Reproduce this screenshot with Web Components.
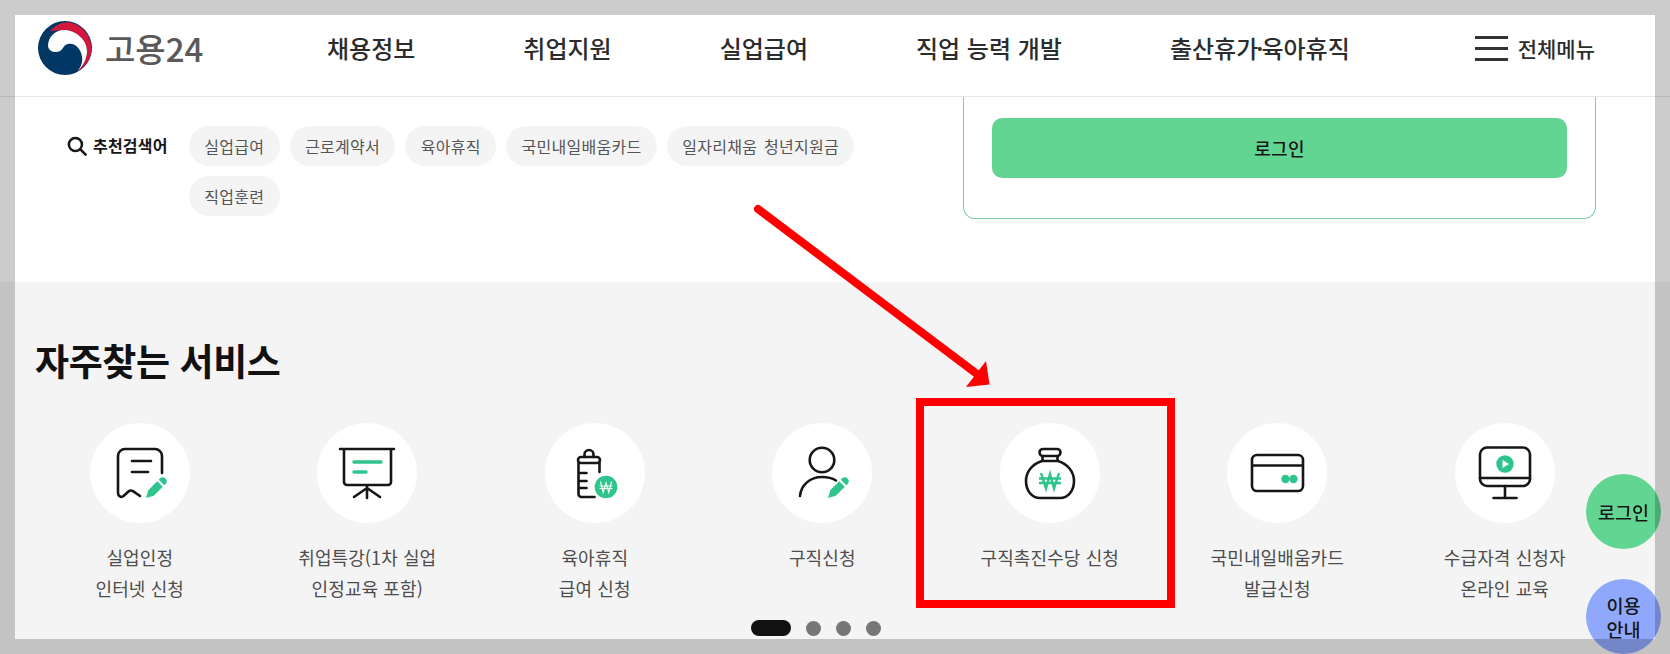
<!DOCTYPE html>
<html lang="ko">
<head>
<meta charset="utf-8">
<title>고용24</title>
<style>
    html, body { margin: 0; padding: 0; height: 654px; overflow: hidden; background: #fff; }
    body { font-family: "Noto Sans CJK KR", "Noto Sans", sans-serif; color: #222; }
    main-page { height: 654px; }
</style>
</head>
<body>
<main-page>
    <site-header></site-header>
    <search-zone>
        <search-chip>실업급여</search-chip>
        <search-chip>근로계약서</search-chip>
        <search-chip>육아휴직</search-chip>
        <search-chip>국민내일배움카드</search-chip>
        <search-chip>일자리채움 청년지원금</search-chip>
        <search-chip>직업훈련</search-chip>
    </search-zone>
    <service-section>
        <service-item icon="doc">실업인정<br>인터넷 신청</service-item>
        <service-item icon="board">취업특강(1차 실업<br>인정교육 포함)</service-item>
        <service-item icon="bottle">육아휴직<br>급여 신청</service-item>
        <service-item icon="person">구직신청</service-item>
        <service-item icon="bag">구직촉진수당 신청</service-item>
        <service-item icon="card">국민내일배움카드<br>발급신청</service-item>
        <service-item icon="monitor">수급자격 신청자<br>온라인 교육</service-item>
    </service-section>
</main-page>
<mark-up></mark-up>
<float-button color="#62d592" bottom="105">로그인</float-button>
<float-button color="#8fa8fb" bottom="0">이용<br>안내</float-button>
<screen-frame></screen-frame>

<script>
const GREEN = '#2fc48d';
const INK = '#161616';

const PEN = `<path fill="${GREEN}" d="M56 75l2.2-7.8 9-9 5.6 5.6-9 9zM68.7 56.7l1.6-1.6a4 4 0 0 1 5.6 5.6l-1.6 1.6z"/>`;

const ICONS = {
    doc: `<g fill="none" stroke="${INK}" stroke-width="2.6" stroke-linecap="round" stroke-linejoin="round">
            <path d="M72 50V33a7 7 0 0 0-7-7H35a7 7 0 0 0-7 7v37c0 3 3 5 5.500 3l5-4.500c1.500-1.300 3-1.300 4.500-.3l7 4.800"/>
            <path d="M42 38h19M42 49h16"/>
          </g>${PEN}`,
    board: `<g fill="none" stroke="${INK}" stroke-width="2.6" stroke-linecap="round" stroke-linejoin="round">
            <path d="M23 26h54M27 26v33a3 3 0 0 0 3 3h41a3 3 0 0 0 3-3V26M50 62v13M50 65l-13 9M50 65l13 9"/>
          </g>
          <path d="M37 39h27M37 49h12" fill="none" stroke="${GREEN}" stroke-width="3.400" stroke-linecap="round"/>`,
    bottle: `<g fill="none" stroke="${INK}" stroke-width="2.600" stroke-linecap="round" stroke-linejoin="round">
            <path d="M39.500 34v-2.500a4.500 4.500 0 1 1 9 0V34"/>
            <path d="M36 34h16a3 3 0 0 1 0 6H36a3 3 0 0 1 0-6z"/>
            <path d="M33.500 40v31a3 3 0 0 0 3 3h13M54.500 40v9M33.500 50h8M33.500 58h8M33.500 65h8"/>
          </g>
          <circle cx="61" cy="64" r="11.300" fill="${GREEN}"/>
          <path d="M55.500 58.500l2.700 11 2.800-9.500 2.800 9.500 2.700-11M54.500 63h13M54.500 65.500h13" fill="none" stroke="#fff" stroke-width="1.100"/>`,
    person: `<g fill="none" stroke="${INK}" stroke-width="2.600" stroke-linecap="round">
            <circle cx="50" cy="37" r="12.300"/>
            <path d="M28 73C29 62 38 54 50 54c5 0 10 1 14 3.500"/>
          </g>${PEN}`,
    bag: `<g fill="none" stroke="${INK}" stroke-width="2.600" stroke-linejoin="round">
            <rect x="39.500" y="26" width="21" height="7" rx="3.500"/>
            <path d="M42.500 33v5M57.500 33v5"/>
            <path d="M42 38h16c10 3 16 11 16 20 0 10-6 17-14 17H40c-8 0-14-7-14-17 0-9 6-17 16-20z"/>
          </g>
          <path d="M41 50l5 15.500L50 51l4 14.500L59 50M39 55.500h22M39 60h22" fill="none" stroke="${GREEN}" stroke-width="2.400"/>`,
    card: `<g fill="none" stroke="${INK}" stroke-width="2.600">
            <rect x="25" y="32" width="51" height="36" rx="5"/>
            <path d="M25 42.500h51"/>
          </g>
          <circle cx="58.500" cy="56" r="4.200" fill="${GREEN}"/><circle cx="66.500" cy="56" r="4.200" fill="${GREEN}"/>`,
    monitor: `<g fill="none" stroke="${INK}" stroke-width="2.600" stroke-linecap="round">
            <rect x="25" y="24.500" width="50" height="38.500" rx="7"/>
            <path d="M25 55h50M50 63v12M38.500 75h23"/>
          </g>
          <circle cx="50" cy="41" r="8.700" fill="${GREEN}"/>
          <path d="M47.500 37l6.500 4-6.500 4z" fill="#fff"/>`
};

class MainPage extends HTMLElement {
    constructor() {
        super();
        this.attachShadow({ mode: 'open' });
        this.shadowRoot.innerHTML = `
            <style>
                :host { display: flex; flex-direction: column; }
            </style>
            <slot></slot>
        `;
    }
}

class SiteHeader extends HTMLElement {
    constructor() {
        super();
        this.attachShadow({ mode: 'open' });
        this.shadowRoot.innerHTML = `
            <style>
                :host {
                    display: flex;
                    align-items: center;
                    flex: none;
                    height: 96px;
                    padding: 0 75px 0 38px;
                    border-bottom: 1px solid #e6e6e6;
                    background: #fff;
                }
                .logo { display: flex; align-items: center; gap: 13px; width: 289px; flex: none; }
                .logo svg { flex: none; }
                .logo span { font-size: 33px; font-weight: 500; line-height: 40px; color: #595959; }
                nav { display: flex; gap: 108px; }
                nav a { font-size: 24px; font-weight: 500; line-height: 36px; color: #2c2c2c; white-space: nowrap; }
                nav b { font-weight: 500; margin: 0 -2px; }
                .menu { margin-left: auto; display: flex; align-items: center; gap: 10px; }
                .bars { display: flex; flex-direction: column; gap: 8px; width: 33px; }
                .bars i { display: block; height: 3px; background: #333; }
                .menu span { font-size: 21px; font-weight: 500; color: #2c2c2c; line-height: 30px; }
            </style>
            <div class="logo">
                <svg width="54" height="54" viewBox="0 0 54 54">
                    <circle cx="27" cy="27" r="27" fill="#003764"/>
                    <path fill="#d6173d" d="M12 10.500C17 4 24 1 30 1.200 43 2.500 53.500 14 53.500 28 53.500 38 47 46 39 51 45 45 49 38 49 30 49 19 38 9 26 9 20 9 15 10 12 10.500z"/>
                    <path fill="#fff" d="M10 25C10 16 17 9 26 9c12 0 23 10 23 21 0 8-4 15-10 21 4-5 6-10 5-15-.500-7-6-13.300-12-13.300-4 0-6 2.300-7 4.300-2 3-5 4-7 4-4 0-7.500-2-8-6z"/>
                </svg>
                <span>고용24</span>
            </div>
            <nav>
                <a>채용정보</a>
                <a>취업지원</a>
                <a>실업급여</a>
                <a>직업 능력 개발</a>
                <a>출산휴가<b>·</b>육아휴직</a>
            </nav>
            <div class="menu">
                <div class="bars"><i></i><i></i><i></i></div>
                <span>전체메뉴</span>
            </div>
        `;
    }
}

class SearchZone extends HTMLElement {
    constructor() {
        super();
        this.attachShadow({ mode: 'open' });
        this.shadowRoot.innerHTML = `
            <style>
                :host {
                    display: flex;
                    flex: none;
                    height: 185px;
                    padding: 0 74px 0 67px;
                    background: #fff;
                }
                .search { display: flex; padding-top: 29px; }
                .label {
                    display: flex;
                    align-items: center;
                    gap: 6px;
                    width: 122px;
                    height: 38px;
                    flex: none;
                    font-size: 16px;
                    font-weight: 700;
                    letter-spacing: 0.2px;
                    color: #161616;
                }
                .label svg { margin-top: 1px; }
                .chips { display: flex; flex-wrap: wrap; gap: 10px; width: 700px; align-content: flex-start; }
                login-card { margin-left: auto; }
            </style>
            <div class="search">
                <div class="label">
                    <svg width="20" height="20" viewBox="0 0 19 19" fill="none" stroke="#161616" stroke-width="2.400" stroke-linecap="round">
                        <circle cx="8" cy="8" r="6.200"/><path d="M12.700 12.700l5 5"/>
                    </svg>
                    추천검색어
                </div>
                <div class="chips"><slot></slot></div>
            </div>
            <login-card></login-card>
        `;
    }
}

class SearchChip extends HTMLElement {
    constructor() {
        super();
        this.attachShadow({ mode: 'open' });
        this.shadowRoot.innerHTML = `
            <style>
                :host {
                    display: flex;
                    align-items: center;
                    height: 40px;
                    padding: 0 15.300px;
                    border-radius: 20px;
                    background: #f4f4f4;
                    font-size: 16px;
                    letter-spacing: 0.3px;
                    word-spacing: 2px;
                    color: #555;
                    white-space: nowrap;
                }
            </style>
            <slot></slot>
        `;
    }
}

class LoginCard extends HTMLElement {
    constructor() {
        super();
        this.attachShadow({ mode: 'open' });
        this.shadowRoot.innerHTML = `
            <style>
                :host {
                    display: block;
                    box-sizing: border-box;
                    width: 633px;
                    height: 122px;
                    padding: 21px 28px 0;
                    border: 1px solid #7fcda0;
                    border-top: 0;
                    border-radius: 0 0 12px 12px;
                }
                .btn {
                    display: flex;
                    align-items: center;
                    justify-content: center;
                    height: 60px;
                    border-radius: 10px;
                    background: #62d592;
                    font-size: 18px;
                    font-weight: 500;
                    letter-spacing: 0.3px;
                    color: #161616;
                }
            </style>
            <div class="btn">로그인</div>
        `;
    }
}

class ServiceSection extends HTMLElement {
    constructor() {
        super();
        this.attachShadow({ mode: 'open' });
        this.shadowRoot.innerHTML = `
            <style>
                :host {
                    display: flex;
                    flex-direction: column;
                    flex: none;
                    height: 372px;
                    background: #f4f4f4;
                    overflow: hidden;
                }
                h2 {
                    margin: 53px 0 38px 35px;
                    font-size: 37px;
                    font-weight: 700;
                    line-height: 50px;
                    letter-spacing: -0.4px;
                    color: #111;
                }
                .list {
                    display: grid;
                    grid-template-columns: repeat(7, 1fr);
                    height: 197px;
                    padding: 0 51.5px 0 26px;
                }
                .dots { display: flex; justify-content: center; align-items: center; gap: 15px; height: 16px; padding-right: 38px; }
                .dots i { display: block; width: 15px; height: 15px; border-radius: 50%; background: #777; }
                .dots i.on { width: 40px; height: 16px; border-radius: 8px; background: #111; }
            </style>
            <h2>자주찾는 서비스</h2>
            <div class="list"><slot></slot></div>
            <div class="dots"><i class="on"></i><i></i><i></i><i></i></div>
        `;
    }
}

class ServiceItem extends HTMLElement {
    constructor() {
        super();
        this.attachShadow({ mode: 'open' });
        this.shadowRoot.innerHTML = `
            <style>
                :host {
                    display: flex;
                    flex-direction: column;
                    align-items: center;
                    font-size: 18px;
                    line-height: 31px;
                    letter-spacing: 0.1px;
                    color: #4d4d4d;
                    text-align: center;
                }
                .circle {
                    width: 100px;
                    height: 100px;
                    flex: none;
                    margin-bottom: 19px;
                    border-radius: 50%;
                    background: #fff;
                }
                svg { display: block; }
            </style>
            <div class="circle">
                <svg width="100" height="100" viewBox="0 0 100 100">${ICONS[this.getAttribute('icon')] || ''}</svg>
            </div>
            <div><slot></slot></div>
        `;
    }
}

// 스크린샷 위의 빨간 표시 (화살표, 네모)
class MarkUp extends HTMLElement {
    constructor() {
        super();
        this.attachShadow({ mode: 'open' });
        this.shadowRoot.innerHTML = `
            <style>
                :host { position: fixed; inset: 0; pointer-events: none; }
                svg { position: absolute; left: 0; top: 0; }
                .box {
                    position: absolute;
                    left: 916px;
                    top: 398px;
                    width: 259px;
                    height: 210px;
                    box-sizing: border-box;
                    border: 8px solid #f00;
                }
            </style>
            <svg width="1670" height="654" viewBox="0 0 1670 654">
                <path d="M758 209L977 374" stroke="#f00" stroke-width="8" stroke-linecap="round" fill="none"/>
                <path d="M986 361L989.500 384.500 966 387z" fill="#f00"/>
            </svg>
            <div class="box"></div>
        `;
    }
}

class FloatButton extends HTMLElement {
    constructor() {
        super();
        this.attachShadow({ mode: 'open' });
        this.shadowRoot.innerHTML = `
            <style>
                :host {
                    position: fixed;
                    right: 9px;
                    bottom: ${this.getAttribute('bottom')}px;
                    display: flex;
                    align-items: center;
                    justify-content: center;
                    width: 75px;
                    height: 75px;
                    border-radius: 50%;
                    background: ${this.getAttribute('color')};
                    font-size: 18.500px;
                    font-weight: 500;
                    line-height: 24px;
                    color: #161616;
                    text-align: center;
                }
            </style>
            <div><slot></slot></div>
        `;
    }
}

// 화면 둘레의 반투명 회색 테두리
class ScreenFrame extends HTMLElement {
    constructor() {
        super();
        this.attachShadow({ mode: 'open' });
        this.shadowRoot.innerHTML = `
            <style>
                :host {
                    position: fixed;
                    inset: 0;
                    box-sizing: border-box;
                    border: 15px solid rgba(0, 0, 0, 0.2);
                    pointer-events: none;
                }
            </style>
        `;
    }
}

customElements.define('main-page', MainPage);
customElements.define('site-header', SiteHeader);
customElements.define('search-zone', SearchZone);
customElements.define('search-chip', SearchChip);
customElements.define('login-card', LoginCard);
customElements.define('service-section', ServiceSection);
customElements.define('service-item', ServiceItem);
customElements.define('mark-up', MarkUp);
customElements.define('float-button', FloatButton);
customElements.define('screen-frame', ScreenFrame);
</script>
</body>
</html>
